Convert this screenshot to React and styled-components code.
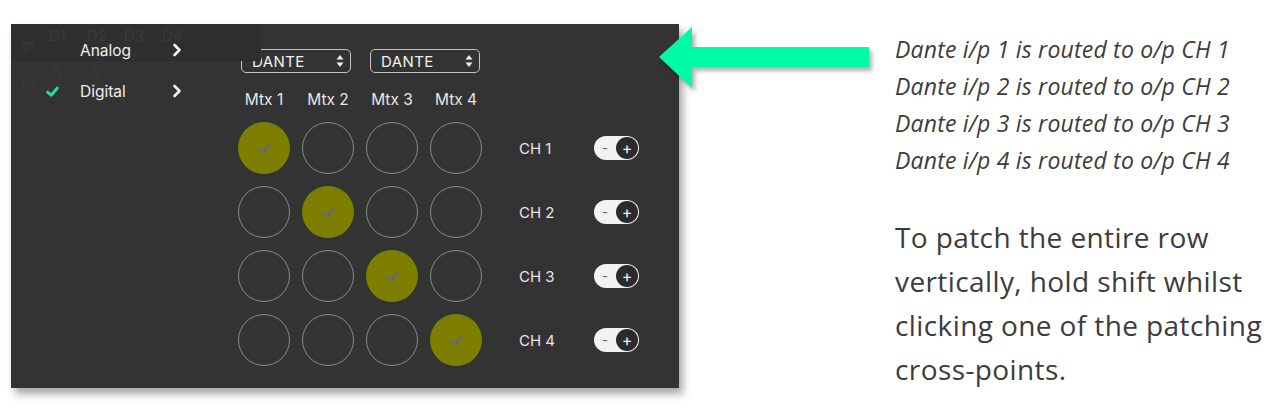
import React from "react";
import styled, { createGlobalStyle } from "styled-components";

const GlobalStyle = createGlobalStyle`
  html, body {
    margin: 0;
    padding: 0;
    background: #ffffff;
  }
`;

const Page = styled.div`
  width: 1274px;
  height: 409px;
  display: flex;
  align-items: flex-start;
  overflow: hidden;
`;

const Panel = styled.div`
  position: relative;
  margin: 24px 0 0 11px;
  width: 668px;
  height: 364px;
  flex-shrink: 0;
  background: #333333;
  box-shadow: 4px 6px 8px rgba(0, 0, 0, 0.35);
  display: flex;
  font-family: Inter, "Liberation Sans", sans-serif;
  color: #e8e8e8;
`;

/* faded table behind the popup menu */
const Ghost = styled.div`
  position: absolute;
  left: 0;
  top: 0;
  width: 250px;
  height: 100px;
  color: #3a3a3a;
  pointer-events: none;
`;

const GhostBand = styled.div`
  height: 36px;
  background: #2f2f2f;
  border-bottom: 1px solid #2a2a2a;
`;

const GhostText = styled.span`
  position: absolute;
  left: ${(p) => p.x}px;
  top: ${(p) => p.y}px;
  font-size: ${(p) => p.size || 14}px;
  line-height: 1;
`;

const Menu = styled.div`
  position: relative;
  width: 227px;
  padding-top: 16px;
  display: flex;
  flex-direction: column;
  gap: 21px;
`;

const MenuItem = styled.div`
  display: flex;
  align-items: center;
  height: 20px;
  font-size: 15.5px;
  color: #f0f0f0;
`;

const CheckSlot = styled.div`
  width: 69px;
  display: flex;
  justify-content: flex-end;
  padding-right: 20px;
  box-sizing: border-box;
`;

const MenuLabel = styled.span`
  width: 92px;
`;

const Matrix = styled.div`
  display: flex;
  flex-direction: column;
  padding-top: 25px;
`;

const SelectRow = styled.div`
  display: flex;
  gap: 19px;
  padding-left: 3px;
`;

const Select = styled.div`
  width: 110px;
  height: 24px;
  box-sizing: border-box;
  border: 1.5px solid #c4c4c4;
  border-radius: 5px;
  display: flex;
  align-items: center;
  justify-content: space-between;
  padding: 0 6px 0 10px;
  font-size: 15px;
  letter-spacing: 0.4px;
  color: #f0f0f0;
`;

const Grid = styled.div`
  display: grid;
  grid-template-columns: repeat(4, 52px) 88px 45px;
  column-gap: 12px;
  row-gap: 12px;
  align-items: center;
`;

const ColLabel = styled.div`
  text-align: center;
  font-size: 15.5px;
  color: #e6e6e6;
  margin: 17px -8px 1px;
  white-space: nowrap;
`;

const Point = styled.div`
  width: 52px;
  height: 52px;
  box-sizing: border-box;
  border-radius: 50%;
  border: ${(p) => (p.on ? "none" : "1.5px solid #8a8a8a")};
  background: ${(p) => (p.on ? "#7e7e00" : "transparent")};
  display: flex;
  align-items: center;
  justify-content: center;
`;

const ChLabel = styled.div`
  font-size: 15px;
  color: #e6e6e6;
  padding-left: 25px;
  white-space: nowrap;
`;

const Toggle = styled.div`
  width: 45px;
  height: 24px;
  border-radius: 12px;
  background: #f2f2f2;
  display: flex;
  align-items: center;
  justify-content: space-between;
  padding: 0 1px 0 8px;
  box-sizing: border-box;
  font-size: 13px;
  color: #555;
`;

const Knob = styled.div`
  width: 22px;
  height: 22px;
  border-radius: 50%;
  background: #2b2b2b;
  color: #f2f2f2;
  display: flex;
  align-items: center;
  justify-content: center;
  font-size: 16px;
  line-height: 1;
`;

const ArrowWrap = styled.div`
  margin: 26px 0 0 -22px;
  width: 216px;
  flex-shrink: 0;
  filter: drop-shadow(3px 4px 2px rgba(0, 0, 0, 0.3));
`;

const Notes = styled.div`
  margin: 31px 0 0 22px;
  font-family: "Open Sans", "Noto Sans", sans-serif;
  color: #3c3c3c;
`;

const RouteLine = styled.div`
  font-style: italic;
  font-size: 23px;
  line-height: 37px;
  letter-spacing: 0.2px;
  white-space: nowrap;
`;

const Tip = styled.p`
  margin: 36px 0 0;
  font-size: 28px;
  line-height: 44px;
  letter-spacing: 0.4px;
  white-space: nowrap;
`;

const Tick = ({ color, size = 14, width = 2.6 }) => (
  <svg width={size} height={size} viewBox="0 0 14 14">
    <polyline
      points="2.5,7.5 5.8,10.5 11.5,3.8"
      fill="none"
      stroke={color}
      strokeWidth={width}
      strokeLinecap="round"
      strokeLinejoin="round"
    />
  </svg>
);

const Chevron = () => (
  <svg width="10" height="14" viewBox="0 0 10 14">
    <polyline
      points="2.5,2 7.5,7 2.5,12"
      fill="none"
      stroke="#f4f4f4"
      strokeWidth="2.6"
      strokeLinecap="round"
      strokeLinejoin="round"
    />
  </svg>
);

const Stepper = () => (
  <svg width="8" height="14" viewBox="0 0 8 14">
    <polygon points="4,1 7.5,5.5 0.5,5.5" fill="#f0f0f0" />
    <polygon points="4,13 7.5,8.5 0.5,8.5" fill="#f0f0f0" />
  </svg>
);

const Arrow = () => (
  <svg width="216" height="64" viewBox="0 0 216 64">
    <polygon
      points="2,31 35,1 35,21 212,21 212,41 35,41 35,62"
      fill="#00fba6"
    />
  </svg>
);

const routes = [0, 1, 2, 3];

const App = () => {
  return (
    <>
      <GlobalStyle />
      <Page>
        <Panel>
          <Ghost>
            <GhostBand />
            <GhostText x={38} y={4} size={15}>D1</GhostText>
            <GhostText x={76} y={4} size={15}>D2</GhostText>
            <GhostText x={113} y={4} size={15}>D3</GhostText>
            <GhostText x={151} y={4} size={15}>D4</GhostText>
            <GhostText x={11} y={17} size={12}>01</GhostText>
            <GhostText x={42} y={42}>5</GhostText>
            <GhostText x={80} y={42}>5</GhostText>
            <GhostText x={120} y={42}>!</GhostText>
            <GhostText x={158} y={42}>!</GhostText>
            <GhostText x={11} y={54} size={12}>02</GhostText>
          </Ghost>
          <Menu>
            <MenuItem>
              <CheckSlot />
              <MenuLabel>Analog</MenuLabel>
              <Chevron />
            </MenuItem>
            <MenuItem>
              <CheckSlot>
                <Tick color="#1fe08e" size={15} width={2.8} />
              </CheckSlot>
              <MenuLabel>Digital</MenuLabel>
              <Chevron />
            </MenuItem>
          </Menu>
          <Matrix>
            <SelectRow>
              <Select>
                DANTE
                <Stepper />
              </Select>
              <Select>
                DANTE
                <Stepper />
              </Select>
            </SelectRow>
            <Grid>
              {routes.map((c) => (
                <ColLabel key={"m" + c}>Mtx {c + 1}</ColLabel>
              ))}
              <div />
              <div />
              {routes.map((r) => (
                <React.Fragment key={r}>
                  {routes.map((c) => (
                    <Point key={c} on={r === c}>
                      {r === c && <Tick color="#6b6b6b" size={15} width={2.8} />}
                    </Point>
                  ))}
                  <ChLabel>CH {r + 1}</ChLabel>
                  <Toggle>
                    -
                    <Knob>+</Knob>
                  </Toggle>
                </React.Fragment>
              ))}
            </Grid>
          </Matrix>
        </Panel>
        <ArrowWrap>
          <Arrow />
        </ArrowWrap>
        <Notes>
          {routes.map((r) => (
            <RouteLine key={r}>
              Dante i/p {r + 1} is routed to o/p CH {r + 1}
            </RouteLine>
          ))}
          <Tip>
            To patch the entire row
            <br />
            vertically, hold shift whilst
            <br />
            clicking one of the patching
            <br />
            cross-points.
          </Tip>
        </Notes>
      </Page>
    </>
  );
};

export default App;
